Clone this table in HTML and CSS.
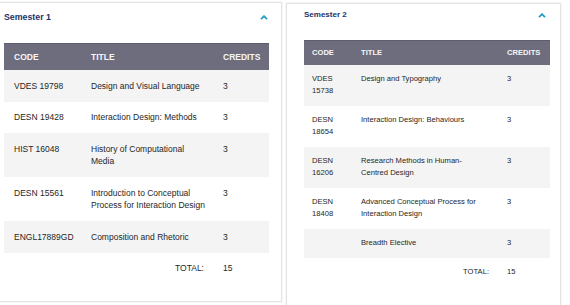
FILE: index.html
```html
<!DOCTYPE html>
<html lang="en">
<head>
<meta charset="utf-8">
<title>Semesters</title>
<link rel="stylesheet" href="styles.css">
</head>
<body>
<div class="page">
  <section class="card card-wide">
    <div class="card-head">
      <h2 class="card-title">Semester 1</h2>
      <svg class="chevron" viewBox="0 0 8 5" width="8" height="5"><polyline points="1,4.2 4,1.2 7,4.2" fill="none" stroke="#1f9cc6" stroke-width="1.8"/></svg>
    </div>
    <table class="courses">
      <colgroup><col class="c-code"><col class="c-title"><col class="c-credits"></colgroup>
      <thead>
        <tr><th>CODE</th><th>TITLE</th><th>CREDITS</th></tr>
      </thead>
      <tbody>
        <tr><td>VDES 19798</td><td class="t">Design and Visual Language</td><td>3</td></tr>
        <tr><td>DESN 19428</td><td class="t">Interaction Design: Methods</td><td>3</td></tr>
        <tr><td>HIST 16048</td><td class="t">History of Computational Media</td><td>3</td></tr>
        <tr><td>DESN 15561</td><td class="t">Introduction to Conceptual Process for Interaction Design</td><td>3</td></tr>
        <tr><td>ENGL17889GD</td><td class="t">Composition and Rhetoric</td><td>3</td></tr>
        <tr class="total"><td></td><td class="total-label">TOTAL:</td><td>15</td></tr>
      </tbody>
    </table>
  </section>
  <section class="card card-narrow">
    <div class="card-head">
      <h2 class="card-title">Semester 2</h2>
      <svg class="chevron" viewBox="0 0 8 5" width="8" height="5"><polyline points="1,4.2 4,1.2 7,4.2" fill="none" stroke="#1f9cc6" stroke-width="1.8"/></svg>
    </div>
    <table class="courses">
      <colgroup><col class="c-code"><col class="c-title"><col class="c-credits"></colgroup>
      <thead>
        <tr><th>CODE</th><th>TITLE</th><th>CREDITS</th></tr>
      </thead>
      <tbody>
        <tr><td>VDES 15738</td><td class="t">Design and Typography</td><td>3</td></tr>
        <tr><td>DESN 18654</td><td class="t">Interaction Design: Behaviours</td><td>3</td></tr>
        <tr><td>DESN 16206</td><td class="t">Research Methods in Human-Centred Design</td><td>3</td></tr>
        <tr><td>DESN 18408</td><td class="t">Advanced Conceptual Process for Interaction Design</td><td>3</td></tr>
        <tr><td></td><td class="t">Breadth Elective</td><td>3</td></tr>
        <tr class="total"><td></td><td class="total-label">TOTAL:</td><td>15</td></tr>
      </tbody>
    </table>
  </section>
</div>
</body>
</html>
```
FILE: styles.css
```css
* { box-sizing: border-box; }
html, body { margin: 0; padding: 0; background: #ffffff; }
body {
  font-family: "Liberation Sans", Arial, sans-serif;
  color: #262626;
  overflow: hidden;
}
.page {
  display: flex;
  align-items: flex-start;
  gap: 4px;
  padding-top: 2px;
}
.card {
  flex: none;
  background: #ffffff;
  border: 1px solid #e3e3e3;
  box-shadow: 0 0 2px rgba(0, 0, 0, 0.10);
}
.card-head {
  display: flex;
  align-items: center;
  justify-content: space-between;
}
.card-title {
  margin: 0;
  font-weight: bold;
  color: #17356a;
}
.chevron { display: block; }
.courses {
  width: 100%;
  border-collapse: collapse;
  table-layout: fixed;
}
.courses th {
  background: #6e6d7d;
  color: #f6f6f8;
  font-weight: bold;
  text-align: left;
  border-top: 1px solid #5e5d6c;
}
.courses td { vertical-align: top; }
.courses tbody tr:nth-child(odd) td { background: #f4f4f4; }
.courses tbody tr.total td { background: #ffffff; }
.total-label { text-align: right; }

/* Semester 1 card (wider rendering) */
.card-wide {
  width: 298px;
  margin-left: -16px;
  padding: 0 12px 17px 19px;
  font-size: 8.5px;
  line-height: 12.5px;
}
.card-wide .card-head { height: 28px; margin-bottom: 12px; }
.card-wide .card-title { font-size: 8.8px; }
.card-wide .chevron { margin-right: 1px; }
.card-wide .c-code { width: 77px; }
.card-wide .c-title { width: 132px; }
.card-wide .c-credits { width: 56px; }
.card-wide th { padding: 6.5px 10px 7px; }
.card-wide td { padding: 9.5px 10px; }
.card-wide td.t { padding-right: 6px; }
.card-wide .total-label { padding-right: 9px; }

/* Semester 2 card */
.card-narrow {
  width: 275px;
  margin-top: 1px;
  padding: 0 10px 19px 17px;
  font-size: 7.6px;
  line-height: 12px;
}
.card-narrow .card-head { height: 22px; margin-bottom: 14px; }
.card-narrow .card-title { font-size: 8px; }
.card-narrow .chevron { margin-right: 4px; }
.card-narrow .c-code { width: 49px; }
.card-narrow .c-title { width: 146px; }
.card-narrow .c-credits { width: 51px; }
.card-narrow th { padding: 5.5px 8px 6px; }
.card-narrow td { padding: 8.5px 8px; }
.card-narrow td.t { padding-right: 17px; }
.card-narrow .total-label { padding-right: 10px; }
```
